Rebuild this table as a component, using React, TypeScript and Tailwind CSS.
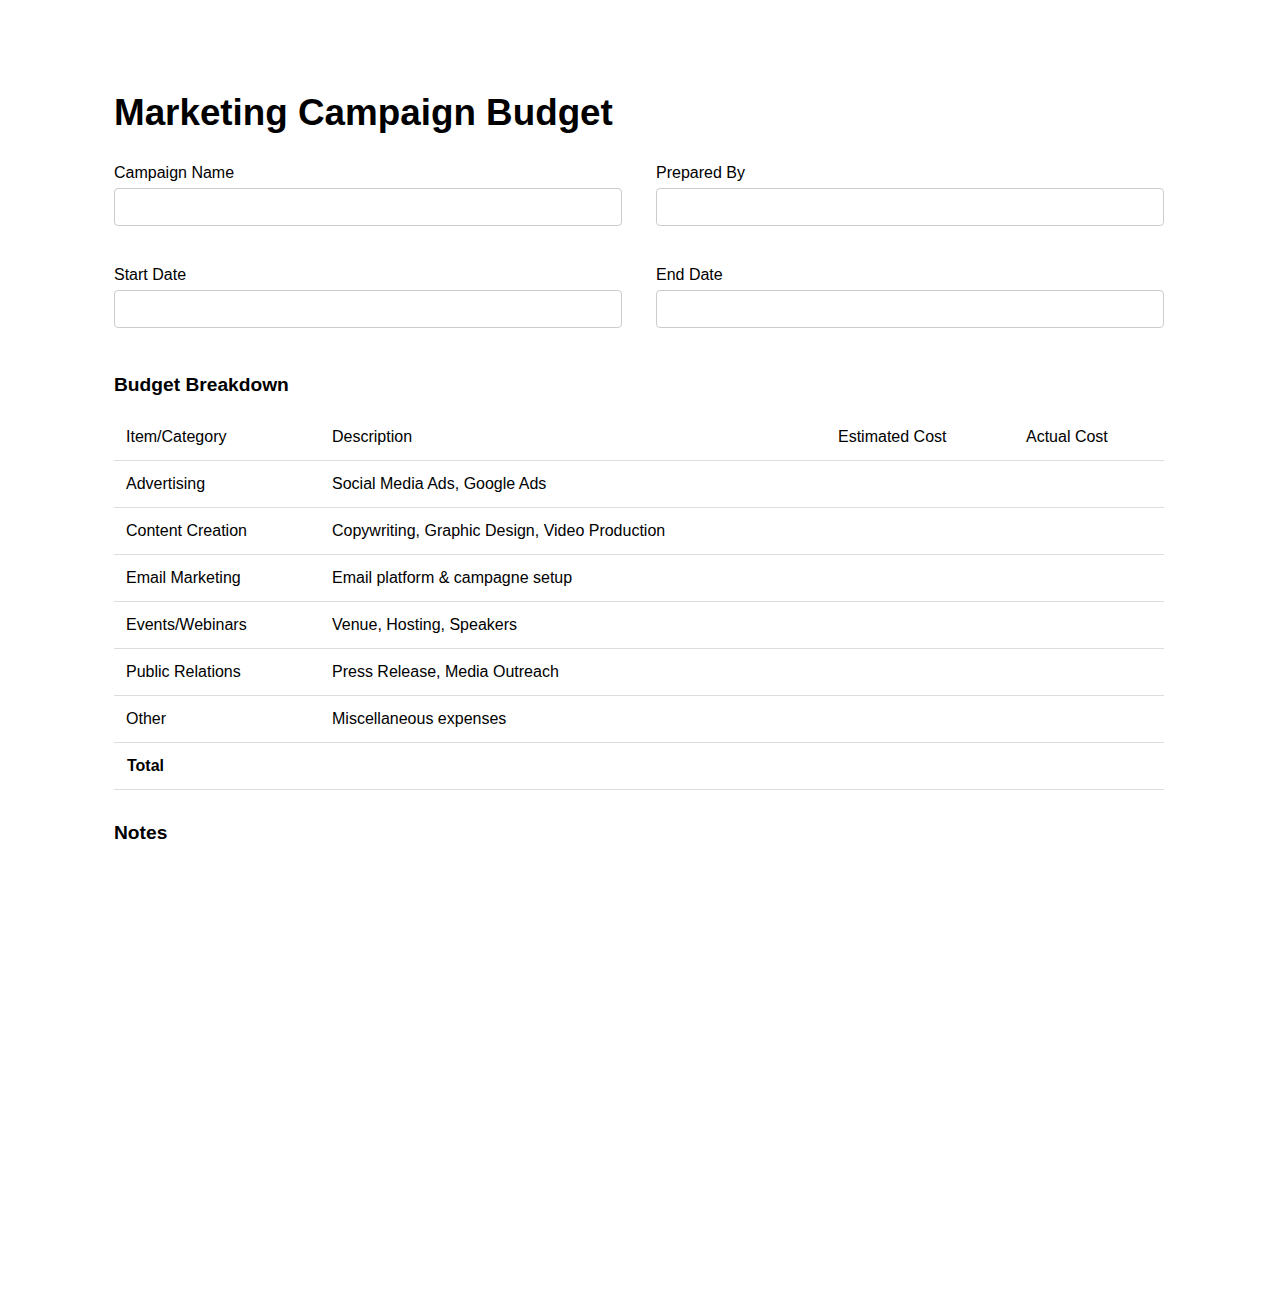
const fields = ['Campaign Name', 'Prepared By', 'Start Date', 'End Date']

const rows: { item: string; description: string }[] = [
    { item: 'Advertising', description: 'Social Media Ads, Google Ads' },
    { item: 'Content Creation', description: 'Copywriting, Graphic Design, Video Production' },
    { item: 'Email Marketing', description: 'Email platform & campagne setup' },
    { item: 'Events/Webinars', description: 'Venue, Hosting, Speakers' },
    { item: 'Public Relations', description: 'Press Release, Media Outreach' },
    { item: 'Other', description: 'Miscellaneous expenses' },
]

const App = () => {
    return (
        <div className="min-h-[1300px] bg-white text-black font-['Liberation_Sans',Arial,sans-serif]">
            <div className="mx-auto w-[1050px] pt-[92px]">
                <h1 className="text-[36.8px] leading-[42px] font-bold">Marketing Campaign Budget</h1>

                {/* form fields */}
                <div className="mt-[29px] grid grid-cols-2 gap-x-[34px] gap-y-[39px]">
                    {fields.map((label) => (
                        <div key={label} className="flex flex-col">
                            <label className="text-base leading-[20px] mb-[5px]">{label}</label>
                            <input
                                type="text"
                                className="h-[38px] w-full rounded-[4px] border border-[#cccccc] px-2 outline-none"
                            />
                        </div>
                    ))}
                </div>

                <h3 className="mt-[46px] text-[19.2px] leading-[22px] font-bold">Budget Breakdown</h3>

                <table className="mt-[18px] w-full border-collapse text-base leading-[18px]">
                    <thead>
                        <tr className="border-b border-[#dddddd]">
                            <th className="w-[206px] px-3 py-[14px] text-left font-normal">Item/Category</th>
                            <th className="w-[506px] px-3 py-[14px] text-left font-normal">Description</th>
                            <th className="w-[188px] px-3 py-[14px] text-left font-normal">Estimated Cost</th>
                            <th className="px-3 py-[14px] text-left font-normal">Actual Cost</th>
                        </tr>
                    </thead>
                    <tbody>
                        {rows.map((row) => (
                            <tr key={row.item} className="border-b border-[#dddddd]">
                                <td className="px-3 py-[14px]">{row.item}</td>
                                <td className="px-3 py-[14px]">{row.description}</td>
                                <td className="px-3 py-[14px]"></td>
                                <td className="px-3 py-[14px]"></td>
                            </tr>
                        ))}
                        <tr className="border-b border-[#dddddd]">
                            <td className="pl-[13px] pr-3 py-[14px] font-bold">Total</td>
                            <td className="px-3 py-[14px]"></td>
                            <td className="px-3 py-[14px]"></td>
                            <td className="px-3 py-[14px]"></td>
                        </tr>
                    </tbody>
                </table>

                <h3 className="mt-[32px] text-[19.2px] leading-[22px] font-bold">Notes</h3>
            </div>
        </div>
    )
}

export default App
